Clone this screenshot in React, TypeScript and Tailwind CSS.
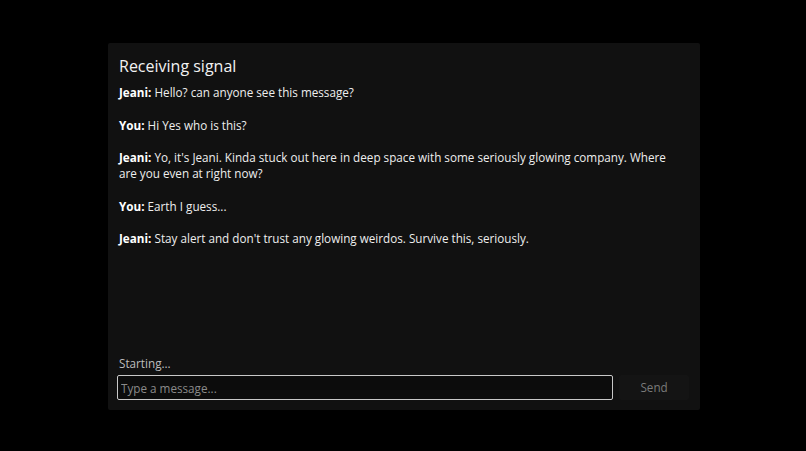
export default function App() {
  const messages = [
    { who: "Jeani", text: "Hello? can anyone see this message?" },
    { who: "You", text: "Hi Yes who is this?" },
    {
      who: "Jeani",
      text: "Yo, it's Jeani. Kinda stuck out here in deep space with some seriously glowing company. Where are you even at right now?",
    },
    { who: "You", text: "Earth I guess..." },
    { who: "Jeani", text: "Stay alert and don't trust any glowing weirdos. Survive this, seriously." },
  ]

  return (
    <div
      className="w-[806px] h-[451px] bg-black flex pl-[108px] pt-[43px]"
      style={{ fontFamily: "'Open Sans', sans-serif" }}
    >
      <div className="w-[592px] h-[367px] bg-[#111111] rounded-[2px] px-[11px] pt-[12px] pb-[10px] flex flex-col">
        <h2 className="text-[16px] leading-[22px] font-medium text-[#f2f2f2] mb-[7px]">Receiving signal</h2>
        <div className="flex-1 flex flex-col gap-[16.5px] text-[11.7px] leading-[16px] font-medium text-[#eeeeee] pr-[20px]">
          {messages.map((m, i) => (
            <p key={i}>
              <span className="font-bold text-white">{m.who}:</span> {m.text}
            </p>
          ))}
        </div>
        <div className="text-[11.7px] leading-[16px] font-medium text-[#bdbdbd] mb-[4px]">Starting...</div>
        <div className="flex items-center gap-[6px]">
          <input
            placeholder="Type a message..."
            className="w-[497px] h-[25px] ml-[-2px] bg-[#0c0c0c] border border-[#c8c8c8] rounded-[2px] px-[3px] text-[11.7px] font-medium text-[#ddd] placeholder:text-[#8a8a8a] outline-none"
          />
          <button className="w-[70px] h-[25px] bg-[#141414] text-[11.7px] font-medium text-[#7a7a7a] rounded-[2px]">
            Send
          </button>
        </div>
      </div>
    </div>
  )
}
